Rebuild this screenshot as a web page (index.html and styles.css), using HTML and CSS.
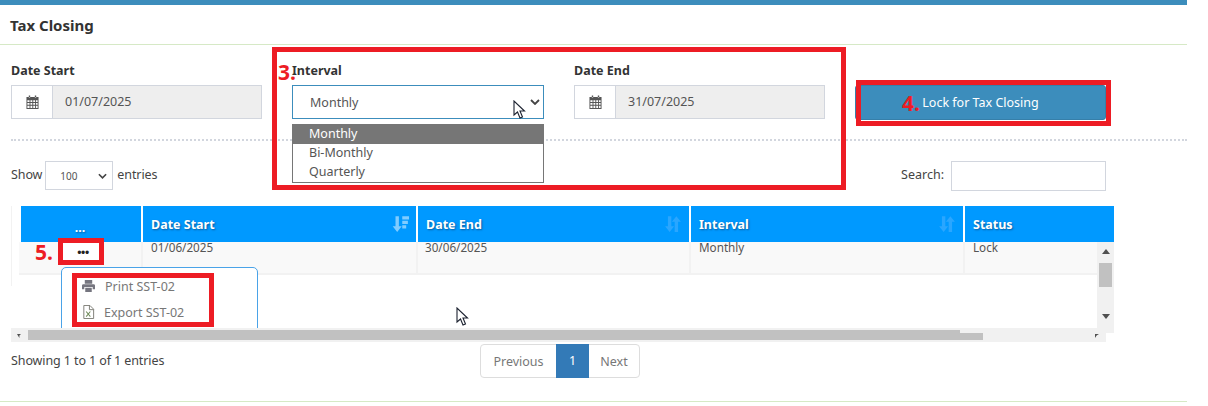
FILE: index.html
```html
<!DOCTYPE html>
<html lang="en">
<head>
<meta charset="utf-8">
<title>Tax Closing</title>
<link rel="stylesheet" href="styles.css">
</head>
<body>
<div class="page">
  <header class="title-bar"><h1>Tax Closing</h1></header>

  <section class="form-row">
    <div class="field">
      <label>Date Start</label>
      <div class="date-input">
        <span class="addon"><svg class="cal" viewBox="0 0 14 15"><path d="M3 0h1.500v2.200h-1.500zM9.500 0h1.500v2.200h-1.500zM0.500 1.500h13v13h-13zM1.500 5v2h2.300v-2zM4.800 5v2h2v-2zM7.800 5v2h2v-2zM10.800 5v2h1.700v-2zM1.500 8v2h2.300v-2zM4.800 8v2h2v-2zM7.800 8v2h2v-2zM10.800 8v2h1.700v-2zM1.500 11v2.500h2.300v-2.500zM4.800 11v2.500h2v-2.500zM7.800 11v2.500h2v-2.500zM10.800 11v2.500h1.700v-2.500z" fill-rule="evenodd"/></svg></span>
        <span class="value">01/07/2025</span>
      </div>
    </div>
    <div class="field wide">
      <label>Interval</label>
      <div class="select-closed">
        <span>Monthly</span>
        <svg class="chev" viewBox="0 0 10 6"><path d="M1 1l4 4 4-4" fill="none" stroke="#444" stroke-width="1.800"/></svg>
      </div>
      <ul class="select-list">
        <li class="selected">Monthly</li>
        <li>Bi-Monthly</li>
        <li>Quarterly</li>
      </ul>
    </div>
    <div class="field">
      <label>Date End</label>
      <div class="date-input">
        <span class="addon"><svg class="cal" viewBox="0 0 14 15"><path d="M3 0h1.500v2.200h-1.500zM9.500 0h1.500v2.200h-1.500zM0.500 1.500h13v13h-13zM1.500 5v2h2.300v-2zM4.800 5v2h2v-2zM7.800 5v2h2v-2zM10.800 5v2h1.700v-2zM1.500 8v2h2.300v-2zM4.800 8v2h2v-2zM7.800 8v2h2v-2zM10.800 8v2h1.700v-2zM1.500 11v2.500h2.300v-2.500zM4.800 11v2.500h2v-2.500zM7.800 11v2.500h2v-2.500zM10.800 11v2.500h1.700v-2.500z" fill-rule="evenodd"/></svg></span>
        <span class="value">31/07/2025</span>
      </div>
    </div>
    <button class="lock-btn">Lock for Tax Closing</button>
  </section>

  <div class="divider"></div>

  <section class="controls">
    <div class="show"><span class="lift">Show</span><span class="entries">100<svg class="chev small" viewBox="0 0 10 6"><path d="M1 1l4 4 4-4" fill="none" stroke="#444" stroke-width="1.800"/></svg></span><span class="lift">entries</span></div>
    <div class="search"><span class="lift">Search:</span><span class="search-box"></span></div>
  </section>

  <section class="table-wrap">
    <div class="grid head">
      <div class="cell center"><span>...</span></div>
      <div class="cell">Date Start
        <svg class="sort active" viewBox="0 0 16 16"><path d="M4 1h3v9h2.500l-4 5-4-5h2.500zM10 1h6v3h-6zM10 5h5v3h-5zM10 9h3.500v3h-3.500z"/></svg>
      </div>
      <div class="cell">Date End
        <svg class="sort" viewBox="0 0 16 16"><path d="M3.500 1h3v9h2.500l-4 5-4-5h2.500zM9.500 6h-2.500l4-5 4 5h-2.500v9h-3z"/></svg>
      </div>
      <div class="cell">Interval
        <svg class="sort" viewBox="0 0 16 16"><path d="M3.500 1h3v9h2.500l-4 5-4-5h2.500zM9.500 6h-2.500l4-5 4 5h-2.500v9h-3z"/></svg>
      </div>
      <div class="cell">Status</div>
    </div>
    <div class="grid row">
      <div class="cell"></div>
      <div class="cell">01/06/2025</div>
      <div class="cell">30/06/2025</div>
      <div class="cell">Monthly</div>
      <div class="cell">Lock</div>
    </div>
    <button class="dots">&#8226;&#8226;&#8226;</button>
    <div class="menu">
      <div class="menu-item"><svg class="mi" viewBox="0 0 14 13"><path d="M3 0h8v4h-8zM1.500 4.500h11a1.500 1.500 0 0 1 1.500 1.500v4h-2.500v-2.500h-9v2.500h-2.500v-4a1.500 1.500 0 0 1 1.500-1.500zM3.500 8.500h7v4.500h-7z"/></svg>Print SST-02</div>
      <div class="menu-item export"><svg class="mi" viewBox="0 0 13 15"><path d="M1.500.5h6.500l4 4v10h-10.500zM7.500.5v4.500h4.500" fill="none" stroke="#7a7a72" stroke-width="1"/><path d="M4 7l4.500 5.500M8.500 7l-4.500 5.500" fill="none" stroke="#6f8b5a" stroke-width="1.100"/></svg>Export SST-02</div>
    </div>
    <div class="vbar">
      <svg class="arrow" viewBox="0 0 8 5"><path d="M0 5l4-5 4 5z"/></svg>
      <span class="vthumb"></span>
      <svg class="arrow down" viewBox="0 0 8 5"><path d="M0 0l4 5 4-5z"/></svg>
    </div>
    <div class="hbar">
      <svg class="corner left" viewBox="0 0 5 5"><path d="M0 0h5l-2 2v3z"/></svg>
      <span class="hthumb"></span>
      <svg class="corner right" viewBox="0 0 5 5"><path d="M0 0h5l-3 2-2 3z"/></svg>
    </div>
  </section>

  <section class="footer-row">
    <div class="info">Showing 1 to 1 of 1 entries</div>
    <nav class="pager">
      <span class="pg prev">Previous</span><span class="pg current">1</span><span class="pg next">Next</span>
    </nav>
  </section>
  <div class="bottom-line"></div>
</div>

<div class="mark big"></div>
<div class="mark btn"></div>
<div class="mark dotsbox"></div>
<div class="mark menubox"></div>
<span class="num n3">3.</span>
<span class="num n4">4.</span>
<span class="num n5">5.</span>
<svg class="cursor c1" viewBox="0 0 13 19"><path d="M1 1v14l3.500-3 2.500 6 2.500-1-2.500-6h4.500z" fill="#fff" stroke="#1c2230" stroke-width="1.100"/></svg>
<svg class="cursor c2" viewBox="0 0 13 19"><path d="M1 1v14l3.500-3 2.500 6 2.500-1-2.500-6h4.500z" fill="#fff" stroke="#1c2230" stroke-width="1.100"/></svg>
</body>
</html>
```

FILE: styles.css
```css
* { box-sizing: border-box; }
html, body { margin: 0; padding: 0; background: #fff; }
body { font-family: "Noto Sans", "Open Sans", sans-serif; font-size: 12.5px; color: #444; height: 406px; overflow: hidden; position: relative; }
.page { width: 1187px; border-top: 5px solid #3c8dbc; }

.title-bar { height: 40px; border-bottom: 1px solid #d6e9c6; padding: 10px 0 0 10px; }
.title-bar h1 { margin: 0; font-size: 15px; line-height: 20px; font-weight: 700; color: #333; }

.form-row { display: flex; height: 94px; padding: 17px 0 0 11px; }
.field { width: 251px; margin-right: 30px; position: relative; }
.field.wide { width: 252px; }
.field label { display: block; font-weight: 700; font-size: 12.5px; line-height: 18px; color: #333; margin-bottom: 5px; }
.date-input { display: flex; height: 34px; border: 1px solid #d2d6de; }
.addon { width: 41px; border-right: 1px solid #d2d6de; display: flex; align-items: center; justify-content: center; background: #fff; }
.cal { width: 13px; height: 15px; fill: #555; }
.value { flex: 1; background: #eee; padding-left: 12px; line-height: 32px; color: #555; }
.select-closed { height: 34px; border: 1px solid #3c8dbc; display: flex; align-items: center; justify-content: space-between; padding: 0 3px 0 17px; color: #555; }
.chev { width: 10px; height: 6px; }
.select-list { position: absolute; top: 62px; left: 0; width: 252px; margin: 0; padding: 0; list-style: none; border: 1px solid #767676; background: #fff; color: #555; height: 59px; }
.select-list li { height: 19px; line-height: 18px; padding-left: 16px; }
.select-list .selected { background: #767676; color: #fff; }
.lock-btn { width: 251px; height: 35px; margin: 23px 0 0 0; background: #3c8dbc; color: #fff; border: 1px solid #367fa9; border-radius: 3px; font: inherit; padding: 0; }

.divider { border-top: 2px dotted #d2d6de; margin-left: 11px; }

.controls { display: flex; justify-content: space-between; align-items: center; height: 30px; margin-top: 20px; padding: 0 81px 0 11px; }
.show, .search { display: flex; align-items: center; }
.lift { margin-top: -3px; letter-spacing: -0.1px; }
.search .lift { letter-spacing: 0; margin-right: 2px; }
.entries { width: 68px; height: 29px; margin: -1px 4px 0 3px; border: 1px solid #d2d6de; display: flex; align-items: center; justify-content: space-between; padding: 0 5px 0 14px; font-size: 10px; color: #555; }
.chev.small { width: 9px; }
.search-box { width: 155px; height: 30px; margin-left: 5px; border: 1px solid #d2d6de; display: block; }

.table-wrap { position: relative; width: 1103px; height: 136px; margin: 15px 0 0 11px; overflow: hidden; padding-left: 10px; background: linear-gradient(#f2f2f2, #f2f2f2) 0 0 / 1px 80px no-repeat; }
.grid { display: grid; grid-template-columns: 122px 275px 273px 274px 149px; width: 1093px; }
.head { height: 36px; }
.head .cell { background: #0099ff; border-right: 2px solid #fff; color: #fff; font-weight: 700; text-shadow: 1px 1px 2px #0b5c9c; padding: 10px 8px 0; line-height: 18px; position: relative; }
.head .cell:last-child { border-right: 0; }
.head .center { text-align: center; padding-top: 13px; padding-right: 10px; }
.sort { position: absolute; right: 7px; top: 9px; width: 18px; height: 18px; fill: #2aa6ff; }
.sort.active { fill: #80ccff; }
.row { height: 33px; border-bottom: 2px solid #f2f2f2; background: #f9f9f9; margin-left: -2px; width: 1095px; grid-template-columns: 124px 275px 273px 274px 149px; }
.row .cell { border-right: 2px solid #f2f2f2; padding: 0 8px; font-size: 11.7px; line-height: 10px; color: #555; }
.row .cell:nth-child(3) { padding-left: 7px; }
.row .cell:last-child { border-right: 0; }

.dots { position: absolute; left: 52px; top: 36px; width: 40px; height: 22px; border: 0; background: #fff; color: #222; padding: 0; font-size: 12px; line-height: 22px; letter-spacing: -0.4px; }
.menu { position: absolute; left: 50px; top: 61px; width: 197px; height: 90px; border: 1px solid #4aa3e8; border-radius: 5px 5px 0 0; background: #fff; padding: 5px 0 0 20px; color: #777; }
.menu-item { display: flex; align-items: center; height: 26px; gap: 10px; }
.menu-item.export { gap: 9px; }
.mi { width: 13px; height: 14px; fill: #75757f; flex: none; }

.vbar { position: absolute; right: 0; top: 36px; width: 17px; height: 91px; background: #f1f1f1; display: flex; flex-direction: column; align-items: center; padding-top: 7px; }
.arrow { width: 8px; height: 5px; fill: #505050; }
.vthumb { width: 13px; height: 24px; background: #c1c1c1; margin-top: 9px; }
.arrow.down { margin-top: 27px; }
.hbar { position: absolute; left: 0; right: 8px; bottom: 0; height: 14px; background: #f1f1f1; }
.hthumb { position: absolute; left: 17px; top: 2px; width: 955px; height: 10px; background: linear-gradient(#c1c1c1, #c1c1c1) 0 0 / 932px 3px no-repeat, linear-gradient(#c1c1c1, #c1c1c1) 0 3px / 955px 7px no-repeat; }
.corner { position: absolute; top: 6px; width: 4px; height: 4px; fill: #505050; }
.corner.left { left: 6px; }
.corner.right { right: 7px; }

.footer-row { position: relative; display: flex; justify-content: space-between; height: 59px; padding: 10px 0 0 11px; }
.info { line-height: 18px; letter-spacing: -0.1px; }
.pager { position: absolute; left: 480px; top: 2px; display: flex; height: 34px; border: 1px solid #ddd; border-radius: 4px; color: #777; }
.pg { line-height: 33px; text-align: center; }
.prev { width: 75px; }
.next { width: 50px; }
.pg.current { width: 33px; background: #337ab7; color: #fff; height: 34px; margin-top: -1px; }
.bottom-line { border-top: 1px solid #d6e9c6; }

.mark { position: absolute; border: 5px solid #ed1c24; pointer-events: none; }
.mark.big { left: 272px; top: 47px; width: 574px; height: 143px; }
.mark.btn { left: 856px; top: 80px; width: 255px; height: 46px; }
.mark.dotsbox { left: 58px; top: 238px; width: 46px; height: 27px; }
.mark.menubox { left: 72px; top: 273px; width: 142px; height: 54px; }
.num { position: absolute; color: #ed1c24; font-weight: 700; font-size: 21px; line-height: 24px; }
.n3 { left: 278px; top: 60px; }
.n4 { left: 902px; top: 91px; }
.n5 { left: 35px; top: 240px; }
.cursor { position: absolute; width: 13px; height: 19px; }
.c1 { left: 513px; top: 100px; }
.c2 { left: 456px; top: 307px; }
```
